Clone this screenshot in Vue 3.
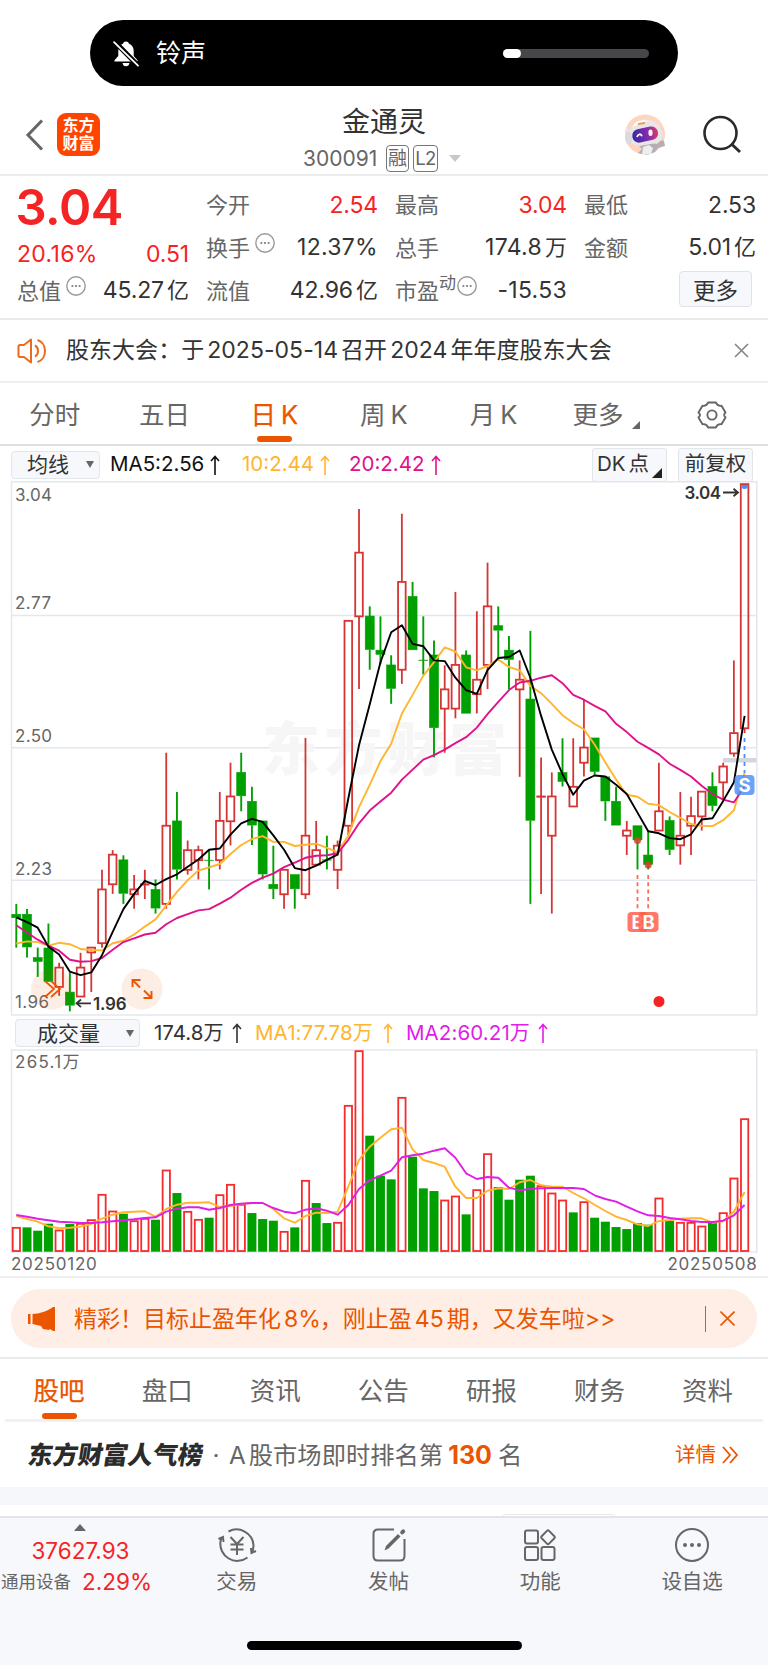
<script setup>
// Price chart: each row is [direction, high, body top, body bottom, low] in plot units
const candles = [
  ['g',1231,1262,1272,1358],['g',1246,1262,1357,1387],['g',1358,1388,1399,1443],['g',1288,1360,1457,1457],
  ['r',1402,1416,1472,1498],['g',1430,1488,1526,1543],['r',1373,1416,1500,1500],['r',1358,1358,1372,1487],
  ['r',1132,1189,1345,1358],['r',1075,1088,1174,1202],['g',1090,1104,1201,1231],['r',1147,1189,1203,1245],
  ['r',1132,1174,1174,1217],['g',1160,1190,1244,1259],['r',792,1004,1231,1245],['g',906,991,1131,1160],
  ['r',1047,1075,1132,1146],['r',1062,1075,1104,1160],['g',1075,1104,1104,1189],['r',906,990,1104,1131],
  ['r',821,919,991,1061],['g',792,850,918,962],['g',891,934,1003,1060],['g',991,991,1145,1160],
  ['g',1062,1175,1188,1217],['r',1132,1132,1203,1245],['g',1147,1147,1188,1245],['r',749,1033,1203,1217],
  ['r',990,1075,1117,1117],['g',1033,1103,1103,1131],['r',1047,1062,1132,1188],['r',409,409,1004,1032],
  ['r',84,211,396,607],['g',367,396,493,551],['g',396,495,507,535],['g',509,538,606,650],
  ['r',98,296,551,592],['g',296,339,494,494],['g',396,523,523,565],['g',466,509,720,805],
  ['r',538,608,664,792],['r',325,537,664,692],['g',495,509,678,678],['r',381,580,622,678],
  ['r',240,367,537,607],['g',367,424,437,520],['g',453,495,522,607],['r',524,580,608,862],
  ['g',438,637,989,1231],['r',806,919,919,1202],['r',849,919,1033,1259],['g',750,850,876,890],
  ['r',750,891,948,948],['r',637,777,821,861],['g',750,750,847,860],['g',862,863,933,990],
  ['g',891,934,1003,1003],['r',990,1018,1033,1089],['g',1005,1005,1046,1131],['g',1018,1090,1117,1131],
  ['r',821,962,1018,1018],['g',977,990,1074,1089],['r',906,1033,1061,1117],['r',920,976,1004,1089],
  ['r',905,905,977,1018],['g',849,891,946,962],['r',821,832,878,930],['r',524,735,794,804],
  ['r',12,12,721,735],
]
const ma5 = [1270,1284,1300,1355,1378,1428,1438,1430,1380,1312,1246,1202,1164,1176,1159,1145,1123,1102,1074,1070,1030,997,984,993,1032,1074,1127,1133,1120,1103,1088,925,770,652,530,442,422,476,483,524,526,574,610,621,552,517,514,495,575,685,783,854,914,873,858,861,885,912,966,1020,1026,1040,1043,1029,986,982,932,878,685]
const ma10 = [1346,1340,1342,1352,1344,1348,1362,1365,1366,1345,1338,1320,1297,1276,1236,1196,1162,1134,1125,1115,1086,1060,1043,1034,1051,1051,1063,1059,1056,1068,1081,1032,950,885,817,766,678,624,568,529,486,498,544,553,540,521,543,553,598,619,650,683,706,724,768,820,870,914,920,940,944,964,981,999,1004,1005,988,959,850]
const ma20 = [1293,1314,1335,1352,1367,1393,1399,1397,1388,1364,1342,1331,1320,1315,1290,1272,1261,1250,1246,1230,1213,1190,1170,1155,1143,1124,1111,1097,1091,1090,1084,1045,997,960,934,908,870,841,812,799,783,764,747,719,680,644,610,588,583,574,567,590,624,638,656,672,708,732,760,778,797,824,842,861,888,912,928,936,890]

// Volume chart: bar tops and averages share one scale
const volumes = 'r652 g653 g663 g642 r660 g643 r640 r629 r553 r603 g612 r632 r625 g630 r480 g550 r604 r628 g624 r554 r523 r583 g610 g628 g633 r664 g653 r511 g580 g640 r637 r286 r122 g378 g498 g509 r262 g441 g536 g544 r570 r558 g614 r539 r431 g532 g570 g510 g498 r527 r549 r570 g608 r575 g624 g636 g652 g658 g640 g645 r564 g633 r637 r637 r648 g637 r608 r504 r326'.split(' ')
const volMa1 = [618,627,635,649,655,653,650,642,626,614,607,605,604,620,597,584,578,578,577,591,588,582,579,579,597,625,638,618,608,609,605,530,450,410,383,358,353,418,450,459,470,530,564,564,542,535,537,517,510,526,530,530,549,565,584,603,620,630,643,648,633,630,626,625,625,638,634,605,546]
const volMa2 = [615,620,626,631,635,637,639,639,637,634,631,628,624,622,605,596,592,592,599,594,585,581,579,579,594,605,610,599,595,602,614,585,537,511,497,482,442,436,431,422,415,443,490,507,501,503,533,541,537,535,534,534,534,537,556,567,575,590,604,616,618,624,628,633,636,636,632,616,585]

const cx = i => 16.3 + i * 10.71
const py = v => v / 2.904 - 1
const vy = v => v / 3 - 39
const line = (a, f) => a.map((v, i) => `${cx(i).toFixed(1)},${f(v).toFixed(1)}`).join(' ')

const bars = candles.map(([d, h, t, b, l], i) => ({
  x: cx(i), up: d === 'r', h: py(h), t: py(t), b: py(b), l: py(l),
}))
const volBars = volumes.map((s, i) => ({ x: cx(i), up: s[0] === 'r', y: vy(+s.slice(1)) }))

const quotes = [
  { k: '今开', v: '2.54', up: true }, { k: '最高', v: '3.04', up: true }, { k: '最低', v: '2.53' },
  { k: '换手', tip: true, v: '12.37%', wide: true }, { k: '总手', v: '174.8', u: '万', wide: true }, { k: '金额', v: '5.01', u: '亿' },
]
const periods = ['分时', '五日', '日K', '周K', '月K']
const pages = ['股吧', '盘口', '资讯', '公告', '研报', '财务', '资料']
</script>

<template>
  <main class="page">
    <div class="island">
      <svg class="bell" width="28" height="28" viewBox="0 0 28 28">
        <path d="M14 1.500c-1.700 0-2.600.9-2.800 2-3.200 1.200-4.900 4-4.900 7.500v5L2.500 20.300v1.200h23v-1.200l-3.800-4.300V11c0-3.500-1.700-6.300-4.900-7.500-.2-1.100-1.100-2-2.800-2zM10.500 23c.3 2 1.600 3.300 3.500 3.300s3.200-1.300 3.500-3.300z" fill="#fff"/>
        <path d="M2.500 1.500l23.500 24" stroke="#000" stroke-width="5"/><path d="M2 2.200l24 23.500" stroke="#fff" stroke-width="1.800" stroke-linecap="round"/>
      </svg>
      <span class="ring">铃声</span>
      <div class="slider"><i></i></div>
    </div>

    <header class="head">
      <div class="head-left">
        <svg width="20" height="32" viewBox="0 0 20 32"><path d="M17 1.500L3 16l14 14.500" fill="none" stroke="#666" stroke-width="3"/></svg>
        <div class="logo"><span>东方</span><span>财富</span></div>
      </div>
      <div class="head-mid">
        <h1>金通灵</h1>
        <div class="code"><span class="num">300091</span><b>融</b><b class="l2">L2</b><svg width="12" height="7"><path d="M0 0h12l-6 7z" fill="#c8c8c8"/></svg></div>
      </div>
      <div class="head-right">
        <svg width="44" height="44" viewBox="0 0 44 44">
          <defs><linearGradient id="visor"><stop offset="0" stop-color="#3a2a9e"/><stop offset=".55" stop-color="#7a2bb0"/><stop offset="1" stop-color="#d63a6a"/></linearGradient></defs>
          <circle cx="22" cy="21.500" r="20" fill="#ffd5c0"/>
          <path d="M16 33l11-3 7 1 4-4 3 1 1 5-7 2-3 4-8 3-9-2 4-4z" fill="#b3afb2"/>
          <path d="M20 34l6-2 4 3-2 6-9 1z" fill="#eee"/>
          <path d="M3 13l4 5C9 11 14 6.500 21 6.500c9 0 16 4 18 12 2 8-1 11-9 12-7 1-15 4-19 1-4-2-8-9-8-18.500z" fill="#e9e6ea"/>
          <path d="M10 13c3-5 9-7 17-5-5 0-10 1-17 6z" fill="#fff"/>
          <ellipse cx="5.500" cy="25" rx="3.500" ry="6.500" fill="#dcd9df"/>
          <rect x="9" y="15" width="26" height="13.500" rx="6.500" transform="rotate(-12 21 21)" fill="url(#visor)"/>
          <path d="M14 24c1-3.500 4-3.500 5-.8" stroke="#fff" stroke-width="1.800" fill="none"/><rect x="25.500" y="16.500" width="4" height="6.500" rx="2" fill="#fff"/>
          <path d="M15 11l7-1" stroke="#f39a52" stroke-width="2"/>
        </svg>
        <svg width="39" height="40" viewBox="0 0 39 40"><circle cx="17.500" cy="18" r="16" fill="none" stroke="#2a2a2a" stroke-width="2.600"/><path d="M28.500 29l8.500 8" stroke="#2a2a2a" stroke-width="3"/></svg>
      </div>
    </header>

    <section class="quote">
      <div class="col first">
        <strong>3.04</strong>
        <div class="row red change"><span class="wide">20.16%</span><span>0.51</span></div>
      </div>
      <div class="cells">
        <div v-for="q in quotes" :key="q.k" class="row">
          <label>{{ q.k }}<svg v-if="q.tip" class="tip" width="20" height="20" viewBox="0 0 20 20"><circle cx="10" cy="10" r="9.200" fill="none" stroke="#999" stroke-width="1.400"/><path d="M5.500 10h9" stroke="#888" stroke-width="1.800" stroke-dasharray="1.800"/></svg></label>
          <span :class="{ red: q.up, wide: q.wide }">{{ q.v }}<em v-if="q.u">{{ q.u }}</em></span>
        </div>
      </div>
      <div class="bottom">
        <div class="row"><label>总值<svg class="tip" width="20" height="20" viewBox="0 0 20 20"><circle cx="10" cy="10" r="9.200" fill="none" stroke="#999" stroke-width="1.400"/><path d="M5.500 10h9" stroke="#888" stroke-width="1.800" stroke-dasharray="1.800"/></svg></label><span>45.27<em>亿</em></span></div>
        <div class="row"><label>流值</label><span>42.96<em>亿</em></span></div>
        <div class="row"><label>市盈<sup>动</sup><svg class="tip near" width="20" height="20" viewBox="0 0 20 20"><circle cx="10" cy="10" r="9.200" fill="none" stroke="#999" stroke-width="1.400"/><path d="M5.500 10h9" stroke="#888" stroke-width="1.800" stroke-dasharray="1.800"/></svg></label><span class="wide">-15.53</span></div>
        <div class="row end"><button>更多</button></div>
      </div>
    </section>

    <section class="notice">
      <svg width="32" height="28" viewBox="0 0 32 28" fill="none" stroke="#eb6a1e" stroke-width="2"><path d="M14 2.500v23L7 20H3c-1 0-1.500-.5-1.500-1.500v-9C1.500 8.500 2 8 3 8h4z" stroke-linejoin="round"/><path d="M18 8.500c4 2 4 9 0 11M20.500 3c10 3 10 19 0 22"/></svg>
      <p>股东大会：于<i>2025-05-14</i>召开<i>2024</i>年年度股东大会</p>
      <svg class="x" width="15" height="15"><path d="M1 1l13 13M14 1L1 14" stroke="#888" stroke-width="1.700"/></svg>
    </section>

    <nav class="periods">
      <a v-for="p in periods" :key="p" :class="{ on: p === '日K' }">{{ p[0] }}<i v-if="p[1] === 'K'">K</i><template v-else>{{ p[1] }}</template></a>
      <a class="more">更多<svg width="8" height="8"><path d="M8 0v8H0z" fill="#666"/></svg></a>
      <svg class="gear" width="30" height="28" viewBox="0 0 30 28" fill="none" stroke="#666" stroke-width="1.900"><path d="M11 1.500h8c1 3 2.500 3.800 5.500 3.300l4 6.700c-2 2-2 3 0 5l-4 6.700c-3-.5-4.500.3-5.500 3.300h-8c-1-3-2.500-3.800-5.500-3.300l-4-6.700c2-2 2-3 0-5l4-6.700c3 .5 4.500-.3 5.500-3.300z" stroke-linejoin="round"/><circle cx="15" cy="14" r="4.600"/></svg>
    </nav>

    <div class="ma">
      <div class="select">均线<svg width="8" height="7"><path d="M0 0h8L4 7z" fill="#666"/></svg></div>
      <span class="m5">MA5:2.56<svg class="arr" width="10" height="20"><path d="M5 20V1.500M1 6l4-4.500L9 6" /></svg></span>
      <span class="m10">10:2.44<svg class="arr" width="10" height="20"><path d="M5 20V1.500M1 6l4-4.500L9 6" /></svg></span>
      <span class="m20">20:2.42<svg class="arr" width="10" height="20"><path d="M5 20V1.500M1 6l4-4.500L9 6" /></svg></span>
      <div class="btn dk"><i>DK</i>点<svg width="10" height="10"><path d="M10 0v10H0z" fill="#222"/></svg></div>
      <div class="btn">前复权</div>
    </div>

    <svg class="chart" width="768" height="535" viewBox="0 0 768 535">
      <g class="frame"><rect x="11.500" y=".8" width="745.300" height="533.200"/><path d="M11.500 134.500h745M11.500 266.700h745M11.500 399.300h745"/></g>
      <text class="mark" x="262" y="289" textLength="245">东方财富</text>
      <g class="axis"><text x="15" y="20" textLength="37">3.04</text><text x="15" y="128" textLength="36">2.77</text><text x="15" y="261" textLength="37">2.50</text><text x="15" y="393.500" textLength="37">2.23</text><text x="15" y="527" textLength="34">1.96</text></g>
      <rect x="723" y="277" width="33.500" height="4.500" fill="#d4d7dc"/>
      <g v-for="(c, i) in bars" :key="i" :class="c.up ? 'up' : 'down'">
        <path v-if="c.t - c.h > 1" :d="`M${c.x} ${c.h}V${c.t}`"/><path v-if="c.l - c.b > 1" :d="`M${c.x} ${c.b}V${c.l}`"/>
        <rect :x="c.x - (c.up ? 3.8 : 4.5)" :y="c.t - (c.up || c.b === c.t ? 0 : .3)" :width="c.up ? 7.600 : 9" :height="Math.max(c.b - c.t, .3)"/>
      </g>
      <path d="M740.500 4h8q-.5 4-4 4t-4-4z" fill="#4a90f5"/>
      <g class="lines"><polyline :points="line(ma10, py)" stroke="#ffb52e"/><polyline :points="line(ma20, py)" stroke="#e0128a"/><polyline :points="line(ma5, py)" stroke="#000"/></g>
      <g fill="#d9402a" opacity=".85"><circle cx="637.500" cy="359.500" r="3.500"/><circle cx="648.200" cy="384" r="3.500"/></g>
      <path d="M637.500 394v34M648.200 394v34" stroke="#ff6b57" stroke-width="1.800" stroke-dasharray="4 3.300"/>
      <path d="M744.500 257v35" stroke="#4a90f5" stroke-width="1.800" stroke-dasharray="4 4"/>
      <g class="tag"><rect x="627.500" y="431" width="20" height="20" rx="4"/><text x="637.500" y="447.500">B</text><rect x="638.500" y="431" width="20" height="20" rx="4"/><text x="648.500" y="447.500">B</text><rect class="sell" x="734.500" y="294" width="20" height="20" rx="4"/><text x="744.500" y="310.500">S</text></g>
      <circle cx="659" cy="520.500" r="5.500" fill="#f52424"/>
      <g fill="#eb5500" fill-opacity=".1"><circle cx="51.500" cy="508" r="20.500"/><circle cx="142" cy="508" r="20.500"/></g>
      <path d="M45 500l9 8-9 8M51 500l9 8-9 8" fill="none" stroke="#eb5500" stroke-width="1.700"/>
      <path d="M132.500 506v-7h8M133 499.500l7 7M151.500 510v7h-8M151 516.500l-7-7" fill="none" stroke="#eb5500" stroke-width="1.900"/>
      <g class="peak"><text x="93" y="528.500" textLength="33.500">1.96</text><text x="684.500" y="18" textLength="36.500">3.04</text><path d="M91 522.300H77M81 518.500l-4.500 3.800 4.500 3.800M723 11.500h14.500M733.500 7.700l4.500 3.800-4.500 3.800"/></g>
    </svg>

    <div class="ma vol">
      <div class="select">成交量<svg width="8" height="7"><path d="M0 0h8L4 7z" fill="#666"/></svg></div>
      <span class="v0">174.8<u>万</u><svg class="arr" width="10" height="20"><path d="M5 20V1.500M1 6l4-4.500L9 6" /></svg></span>
      <span class="v1">MA1:77.78<u>万</u><svg class="arr" width="10" height="20"><path d="M5 20V1.500M1 6l4-4.500L9 6" /></svg></span>
      <span class="v2">MA2:60.21<u>万</u><svg class="arr" width="10" height="20"><path d="M5 20V1.500M1 6l4-4.500L9 6" /></svg></span>
    </div>

    <svg class="chart" width="768" height="204" viewBox="0 0 768 204">
      <rect class="box" x="11.500" y="1" width="745.300" height="202"/>
      <g class="axis"><text x="15" y="19" textLength="64.500">265.1万</text></g>
      <template v-for="(v, i) in volBars" :key="i">
        <rect v-if="v.up" :x="v.x - 3.600" :y="v.y + .5" width="7.300" :height="201.500 - v.y" fill="#fff" stroke="#f42c2c" stroke-width="1.800"/>
        <rect v-else :x="v.x - 4.500" :y="v.y - .3" width="9" :height="203 - v.y" fill="#00a000"/>
      </template>
      <g class="lines"><polyline :points="line(volMa1, vy)" stroke="#ffb52e"/><polyline :points="line(volMa2, vy)" stroke="#e01ee8"/></g>
    </svg>
    <div class="dates"><span>20250120</span><span>20250508</span></div>

    <section class="promo">
      <div class="pill">
        <svg width="28" height="26" viewBox="0 0 28 26" fill="#eb5500"><path d="M0 8h2.500v10H0zM4.500 8C11 8 20 5 25 1h2v24h-2l-3-2-1 1-6-1-2-3-8.500-2z"/></svg>
        <p>精彩！目标止盈年化<i class="pct">8%</i>，刚止盈<i>45</i>期，又发车啦&gt;&gt;</p>
        <span class="bar"></span>
        <svg width="15" height="15"><path d="M.5.5l14 14M14.500.5l-14 14" stroke="#eb5500" stroke-width="1.600"/></svg>
      </div>
    </section>

    <nav class="pages"><a v-for="p in pages" :key="p" :class="{ on: p === '股吧' }">{{ p }}</a></nav>

    <section class="rank">
      <b class="brand">东方财富人气榜</b><span class="dot">·</span>
      <span class="desc"><i>A</i>股市场即时排名第</span><strong>130</strong><span>名</span>
      <span class="detail">详情<svg width="17" height="18"><path d="M1 1l7 8-7 8M8 1l7 8-7 8" fill="none" stroke="#eb5500" stroke-width="1.800"/></svg></span>
    </section>
    <div class="band"></div>
    <div class="peek"><i></i></div>

    <footer>
      <div class="tabs">
        <div class="index">
          <svg width="12" height="7"><path d="M6 0l6 7H0z" fill="#666"/></svg>
          <span class="red">37627.93</span>
          <div><small>通用设备</small><span class="red">2.29%</span></div>
        </div>
        <div class="tab"><svg width="40" height="36" viewBox="0 0 40 36"><path d="M11.500 4.500A17 17 0 0 1 36.500 18q0 4-1.500 8M30.500 30.500A17 17 0 0 1 3.500 14.500l1-4M1.500 12l4.500-2 .5 5M39 24l-4.500 2-.5-5"/><path d="M13.500 10l6.500 7 6.500-7M20 17v11M13.500 17.500h13M13.500 22.500h13"/></svg>交易</div>
        <div class="tab"><svg width="40" height="36" viewBox="0 0 40 36"><path d="M25 2.500H9q-4.500 0-4.500 4.500v22q0 4.500 4.500 4.500h22q4.500 0 4.500-4.500V12"/><path d="M15.500 23.500L17 19 29 7l2.500 2.500-12 12z" fill="#666" stroke="none"/><path d="M33.200 5.300l1-1" stroke-width="4" stroke-linecap="round"/></svg>发帖</div>
        <div class="tab"><svg width="40" height="36" viewBox="0 0 40 36"><rect x="5" y="3.500" width="13" height="13" rx="2"/><rect x="5" y="20" width="13" height="13" rx="2"/><rect x="21.500" y="20" width="13" height="13" rx="2"/><rect x="22.800" y="5" width="10.500" height="10.500" rx="1.500" transform="rotate(45 28 10.200)"/></svg>功能</div>
        <div class="tab"><svg width="40" height="36" viewBox="0 0 40 36"><circle cx="20" cy="18" r="16"/><g fill="#666" stroke="none"><circle cx="13" cy="18" r="2"/><circle cx="20" cy="18" r="2"/><circle cx="27" cy="18" r="2"/></g></svg>设自选</div>
      </div>
      <div class="home"></div>
    </footer>
  </main>
</template>

<style>
html, body { margin: 0; background: #fff; }
</style>

<style scoped>
.page { width: 768px; height: 1665px; overflow: hidden; display: flex; flex-direction: column; background: #fff; color: #333; font-family: Inter, "Noto Sans CJK SC", sans-serif; font-size: 23px; line-height: 1; }
.page > * { flex: none; box-sizing: border-box; }
i, em, u { font-style: normal; text-decoration: none; }
h1, p { margin: 0; font-weight: 400; }
svg { display: block; flex: none; }
.red { color: #f52424; }

.island { width: 588px; height: 66px; margin: 20px 0 0 90px; border-radius: 33px; background: #000; display: flex; align-items: center; padding: 1px 29px 0 22px; }
.ring { color: #fff; font-size: 25px; margin-left: 16px; }
.slider { width: 146px; height: 9px; margin-left: auto; border-radius: 5px; background: #47464b; }
.slider i { display: block; width: 18px; height: 9px; border-radius: 5px; background: #fff; }

.head { height: 90px; border-bottom: 2px solid #ececec; display: grid; grid-template-columns: 1fr 200px 1fr; }
.head-left { display: flex; align-items: center; padding: 17px 0 0 25px; height: 80px; box-sizing: border-box; }
.logo { width: 43px; height: 43px; border-radius: 9px; background: #ff4400; color: #fff; margin-left: 12px; display: flex; flex-direction: column; align-items: center; justify-content: center; font-size: 16px; font-weight: 700; line-height: 17.500px; }
.head-mid { display: flex; flex-direction: column; align-items: center; }
h1 { font-size: 28px; margin-top: 22px; }
.code { display: flex; align-items: center; align-self: flex-start; margin: 9px 0 0 19px; color: #666; height: 27px; }
.code .num { width: 83px; font-size: 21px; letter-spacing: 0; }
.code b { border: 1.500px solid #777; border-radius: 4px; font-weight: 400; height: 25px; width: 21px; font-size: 19px; display: flex; align-items: center; justify-content: center; margin-right: 4px; }
.code b.l2 { width: 23px; font-size: 18.500px; letter-spacing: -.5px; margin-right: 11px; }
.head-right { display: flex; align-items: center; justify-content: flex-end; gap: 36px; padding: 18px 26px 0 0; height: 80px; box-sizing: border-box; }

.quote { height: 144px; border-bottom: 2px solid #e9e9eb; padding: 8px 11.500px 0 17px; display: grid; grid-template-columns: 172px 550px; grid-template-rows: 85px 43px; column-gap: 17px; letter-spacing: -.15px; }
.row { display: flex; justify-content: space-between; align-items: center; }
.wide { letter-spacing: .3px; }
.first strong { display: block; font-size: 49px; font-weight: 600; color: #f52424; line-height: 46px; letter-spacing: -.5px; margin: 1px 0 0 -1.500px; }
.change { height: 47px; }
.cells { display: grid; grid-template-columns: repeat(3, 172px); grid-template-rows: 42px 43px; column-gap: 17px; }
.bottom { grid-column: 1 / 3; display: grid; grid-template-columns: repeat(4, 172px); column-gap: 17px; }
label { color: #666; display: flex; align-items: center; letter-spacing: 0; font-size: 22px; }
.tip { margin: -9px 0 0 5px; }
.tip.near { margin-left: 1px; }
sup { font-size: 17px; line-height: 17px; margin-top: -14px; }
em { font-size: 22px; margin-left: 3px; letter-spacing: 0; }
.end { justify-content: flex-end; padding-right: 4px; }
button { width: 73px; height: 36px; border: 1.500px solid #dfe3e8; border-radius: 4px; background: #f6f8fb; padding: 0; font: 22.500px Inter, "Noto Sans CJK SC", sans-serif; color: #333; margin-top: -3px; }

.notice { height: 63px; border-bottom: 2px solid #efefef; display: flex; align-items: center; padding: 0 19px 0 17px; }
.notice p { margin-left: 17px; font-size: 23px; white-space: nowrap; letter-spacing: .04px; }
.notice p i { margin: 0 3px; }
.notice .x { margin-left: auto; }

.periods { height: 63px; border-bottom: 2px solid #dcdfe4; display: flex; color: #666; font-size: 25.500px; }
.periods a { width: 109.700px; display: flex; justify-content: center; align-items: center; position: relative; height: 62px; padding-top: 1px; box-sizing: border-box; }
.periods a i { margin-left: 5px; }
.on { color: #eb5500; -webkit-text-stroke: .25px #eb5500; }
.periods .on::after, .pages .on::after { content: ""; position: absolute; width: 35px; height: 6px; border-radius: 3px; background: #eb5500; bottom: 3px; left: 50%; margin-left: -17.500px; }
.periods .more { width: 116px; }
.more svg { margin: 20px 0 0 9px; }
.gear { margin: 18px 0 0 33px; }

.ma { height: 35px; display: flex; align-items: center; position: relative; padding: 2px 0 0 11px; font-size: 20.500px; white-space: nowrap; }
.select { box-sizing: border-box; width: 89px; height: 28px; border: 1.500px solid #e2e5ea; border-radius: 4px; background: #f6f8fb; display: flex; align-items: center; justify-content: space-between; padding: 0 5px 0 15px; font-size: 21px; }
.ma span { display: flex; align-items: center; }
.arr { fill: none; stroke: currentColor; stroke-width: 1.600; margin-left: 6px; }
.m5 { width: 132px; margin-left: 10px; color: #111; }
.m10 { width: 107px; color: #ffb52e; }
.m20 { width: 96px; color: #e0128a; }
.btn { box-sizing: border-box; height: 34px; width: 75px; border: 1.500px solid #e2e5ea; border-radius: 3px; background: #f6f8fb; display: flex; align-items: center; justify-content: center; font-size: 20.500px; }
.dk { margin: 0 11px 0 auto; position: relative; justify-content: flex-start; padding-left: 4px; }
.dk i { margin-right: 3px; }
.dk svg { position: absolute; right: 4px; bottom: 3px; }
.ma:not(.vol) { padding-right: 15px; }

.frame, .box { fill: none; stroke: #e3e7ee; stroke-width: 1.500; }
.mark { font: 900 58px "Noto Sans CJK SC"; fill: #f6f6f7; }
.axis { font-size: 17px; fill: #666; }
.up { fill: none; stroke: #d63535; stroke-width: 1.800; }
.down { fill: #00a000; stroke: #00a000; stroke-width: 1.900; }
.down rect { stroke-width: .6; }
.lines { fill: none; stroke-width: 1.900; stroke-linejoin: round; }
.tag rect { fill: #ff5a46; fill-opacity: .82; }
.tag .sell { fill: #4a90f5; }
.tag text { font-size: 18.500px; font-weight: 700; fill: #fff; text-anchor: middle; }
.peak text { font-size: 17px; font-weight: 600; fill: #333; }
.peak path { fill: none; stroke: #333; stroke-width: 1.800; }

.vol { height: 33px; padding-left: 15px; padding-top: 1px; }
.vol .select { width: 125px; padding: 0 5px 0 21px; }
u { font-size: 20px; }
.v0 { width: 101px; margin-left: 14px; color: #333; }
.v1 { width: 151px; color: #ffb52e; letter-spacing: .1px; }
.v2 { color: #e01ee8; letter-spacing: .1px; }
.v0 .arr { margin-left: 9px; }
.v1 .arr { margin-left: 10px; }
.v2 .arr { margin-left: 8px; }
.dates { height: 25px; border-bottom: 2px solid #efefef; display: flex; justify-content: space-between; align-items: center; padding: 0 10.500px 0 11px; color: #666; font-size: 17px; letter-spacing: .75px; }

.promo { height: 81px; border-bottom: 2px solid #ebebed; padding: 11px 11px 0; }
.pill { height: 59px; border-radius: 30px; background: #feeee6; color: #eb5500; display: flex; align-items: center; padding: 0 22px 0 17px; }
.pill p { margin: 1px 0 0 18px; white-space: nowrap; font-size: 23px; }
.pill p i { margin: 0 3px; }
.pill p .pct { margin-right: -1px; }
.bar { width: 1.500px; height: 26px; background: #eb5500; margin: 0 14px 0 auto; }

.pages { height: 63px; margin: 0 5px; border-bottom: 3px solid #f1f1f3; display: flex; color: #666; font-size: 25.500px; }
.pages a { width: 108.100px; height: 63px; padding-top: 1px; box-sizing: border-box; display: flex; align-items: center; justify-content: center; position: relative; }

.rank { height: 65px; display: flex; align-items: center; padding: 1px 29px 0 28px; color: #666; font-size: 24.300px; white-space: nowrap; }
.brand { width: 175px; font-weight: 900; font-size: 25px; color: #2b2b2b; transform: skewX(-9deg); }
.dot { width: 26px; text-align: center; }
.desc i { margin-right: 3px; }
.rank strong { color: #eb5500; font-weight: 700; font-size: 25px; margin: 0 6px 0 5px; }
.rank .detail { margin-left: auto; color: #eb5500; font-size: 20.500px; display: flex; align-items: center; gap: 6px; }
.band { height: 18px; background: #f6f7fa; }
.peek { height: 11px; position: relative; }
.peek i { position: absolute; left: 501px; top: 9px; width: 114px; height: 4px; border: 1px solid #e8e8ea; border-radius: 5px 5px 0 0; }

footer { height: 149px; background: #f6f8fb; border-top: 2px solid #e2e4e9; position: relative; }
.tabs { display: flex; }
.index { width: 161px; display: flex; flex-direction: column; align-items: center; padding-top: 6px; font-size: 22.500px; letter-spacing: 0; }
.index > span { margin-top: 8px; line-height: 24px; }
.index div { display: flex; align-items: center; gap: 11px; align-self: flex-start; margin: 7px 0 0 1px; line-height: 24px; }
small { font-size: 17.500px; color: #666; }
.tab { width: 151.800px; display: flex; flex-direction: column; align-items: center; padding-top: 9px; font-size: 20.500px; color: #666; gap: 9px; }
.tab svg { fill: none; stroke: #666; stroke-width: 2; }
.home { width: 275px; height: 9px; border-radius: 5px; background: #000; position: absolute; left: 246.500px; top: 123px; }
</style>
